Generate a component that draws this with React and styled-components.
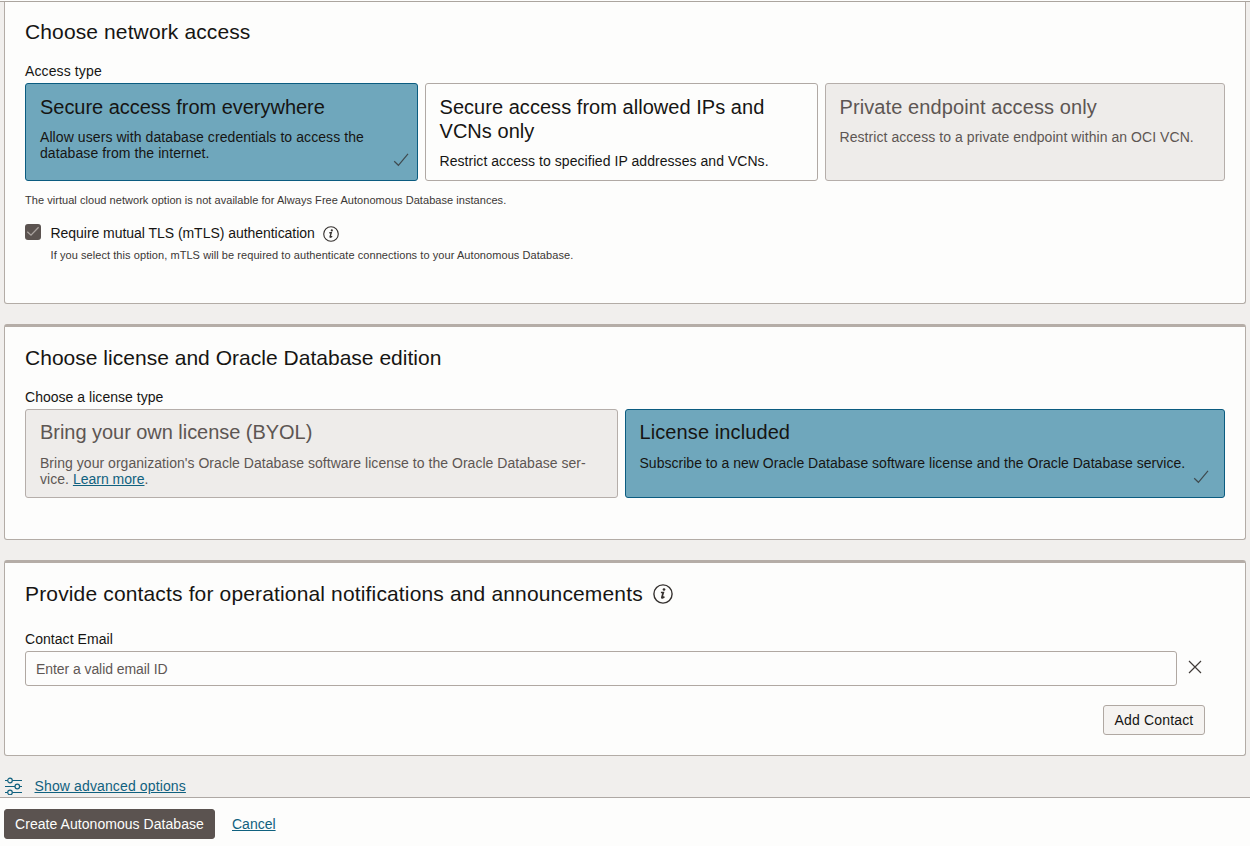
import React from "react";
import styled, { createGlobalStyle } from "styled-components";

const GlobalStyle = createGlobalStyle`
  * { box-sizing: border-box; }
  body {
    margin: 0;
    background: #f1efed;
    font-family: "Liberation Sans", Arial, sans-serif;
    color: #161513;
  }
`;

const Page = styled.div`
  display: flex;
  flex-direction: column;
  height: 846px;
  overflow: hidden;
  border-top: 1px solid #fdfdfc;
`;

const Body = styled.main`
  flex: 1;
  min-height: 0;
  border-top: 1px solid #aba59f;
  padding: 0 4px;
  display: flex;
  flex-direction: column;
  gap: 20px;
`;

const Section = styled.section`
  display: flex;
  flex-direction: column;
  flex: none;
  height: ${(p) => p.$height}px;
  padding: ${(p) => (p.$continued ? 16 : 17)}px 20px 0;
  background: #fdfdfc;
  border: 1px solid #b3aca6;
  border-top: ${(p) => (p.$continued ? "0" : "3px solid #b5ada7")};
  border-radius: ${(p) => (p.$continued ? "0 0 3px 3px" : "3px")};
`;

const Heading = styled.h2`
  display: flex;
  align-items: center;
  gap: 10.5px;
  margin: 0;
  height: 28px;
  font-size: 21px;
  font-weight: 400;
  line-height: 28px;
  letter-spacing: ${(p) => p.$track || 0}px;
  white-space: nowrap;
`;

const Label = styled.label`
  display: block;
  margin-top: ${(p) => p.$gap || 17}px;
  height: 20px;
  font-size: 14px;
  line-height: 17px;
  letter-spacing: ${(p) => p.$track || 0}px;
`;

const Cards = styled.div`
  display: grid;
  grid-template-columns: ${(p) => p.$columns};
  gap: 7px;
  height: ${(p) => p.$height}px;
`;

const tones = {
  selected: { bg: "#6fa7bc", border: "#0b5c80", text: "#161513" },
  plain: { bg: "#fdfdfc", border: "#b0a9a4", text: "#161513" },
  disabled: { bg: "#eeecea", border: "#b5aeaa", text: "#5d5653" },
};

const Card = styled.div`
  position: relative;
  padding: ${(p) => (p.$compact ? 10 : 11)}px 14px 0;
  border: 1px solid ${(p) => tones[p.$tone].border};
  border-radius: 3px;
  background: ${(p) => tones[p.$tone].bg};
  color: ${(p) => tones[p.$tone].text};
  &:not(:first-child) { padding-left: 13.5px; }
`;

const CardTitle = styled.h3`
  margin: 0 0 ${(p) => p.$gap ?? 10}px;
  font-size: 20px;
  font-weight: 400;
  line-height: 24px;
  letter-spacing: ${(p) => p.$track || 0}px;
`;

const CardText = styled.p`
  margin: 0;
  font-size: 14px;
  line-height: 16px;
  letter-spacing: ${(p) => p.$track || 0}px;
  white-space: nowrap;
`;

const CardCheck = styled.svg`
  position: absolute;
  right: ${(p) => p.$right}px;
  bottom: 12px;
`;

const Hint = styled.p`
  margin: ${(p) => p.$top}px 0 0 ${(p) => p.$indent || 0}px;
  font-size: 11px;
  line-height: 14px;
  letter-spacing: ${(p) => p.$track || 0}px;
  color: #3b3735;
`;

const CheckRow = styled.div`
  display: flex;
  align-items: center;
  height: 20px;
  margin-top: 16px;
  > svg { margin-top: 1px; }
`;

const CheckBox = styled.span`
  width: 16px;
  height: 16px;
  margin: -3px 9.5px 0 0;
  border-radius: 3px;
  background: #5b5350;
  svg { display: block; }
`;

const CheckLabel = styled.span`
  margin-right: 8px;
  font-size: 14px;
  letter-spacing: ${(p) => p.$track || 0}px;
`;

const Link = styled.a`
  color: #10617f;
  font-size: 14px;
  letter-spacing: ${(p) => p.$track || 0}px;
  text-decoration: underline;
  text-underline-offset: 1px;
`;

const InputRow = styled.div`
  display: flex;
  align-items: center;
  gap: 11px;
  svg { margin-bottom: 4px; }
`;

const Input = styled.input`
  width: 1152px;
  height: 35px;
  padding: 0 10px;
  border: 1px solid #b0a8a2;
  border-radius: 3px;
  background: #fdfdfc;
  font: 14px "Liberation Sans", Arial, sans-serif;
  letter-spacing: ${(p) => p.$track || 0}px;
  &::placeholder { color: #5f5855; opacity: 1; }
`;

const Button = styled.button`
  flex: none;
  width: ${(p) => p.$width}px;
  height: 30px;
  padding: 0;
  border: 1px solid ${(p) => (p.$primary ? "#5b5350" : "#b0a8a2")};
  border-radius: 3px;
  background: ${(p) => (p.$primary ? "#5b5350" : "#f5f3f1")};
  color: ${(p) => (p.$primary ? "#fdfdfc" : "#161513")};
  font: 14px "Liberation Sans", Arial, sans-serif;
  letter-spacing: ${(p) => p.$track || 0}px;
  white-space: nowrap;
`;

const AddRow = styled.div`
  display: flex;
  justify-content: flex-end;
  margin-top: 19px;
  padding-right: 20px;
`;

const Advanced = styled.div`
  display: flex;
  align-items: center;
  gap: 12.5px;
  height: 20px;
`;

const Footer = styled.footer`
  display: flex;
  align-items: center;
  flex: none;
  gap: 17px;
  height: 49px;
  padding: 4px 4px 0;
  border-top: 1px solid #aea8a4;
  background: #fdfdfc;
`;

const Tick = ({ right }) => (
  <CardCheck $right={right} width="16" height="16" viewBox="0 0 16 16" fill="none" stroke="#3f4a4f" strokeWidth="1.2">
    <path d="M1.2 9.2 5.4 13.3 15 1.8" />
  </CardCheck>
);

const Info = ({ size }) => (
  <svg width={size} height={size} viewBox="0 0 20 20" fill="none" stroke="#35312f">
    <circle cx="10" cy="10" r="9.1" strokeWidth="1.4" />
    <path d="M7.9 8.5h2.4l-1.4 4.7c-.3 1.2.8 1.1 2.5-.5" strokeWidth="1.7" />
    <circle cx="11" cy="5.5" r="1.35" fill="#35312f" stroke="none" />
  </svg>
);

export default function App() {
  return (
    <>
      <GlobalStyle />
      <Page>
        <Body>
          <Section $continued $height={302}>
            <Heading $track={0.12}>Choose network access</Heading>
            <Label $track={0.12}>Access type</Label>
            <Cards $columns="393px 393px 400px" $height={98}>
              <Card $tone="selected">
                <CardTitle $track={-0.03}>Secure access from everywhere</CardTitle>
                <CardText $track={0.08}>
                  Allow users with database credentials to access the
                  <br />
                  database from the internet.
                </CardText>
                <Tick right={8} />
              </Card>
              <Card $tone="plain">
                <CardTitle $track={0.04}>
                  Secure access from allowed IPs and
                  <br />
                  VCNs only
                </CardTitle>
                <CardText $track={0.05}>Restrict access to specified IP addresses and VCNs.</CardText>
              </Card>
              <Card $tone="disabled">
                <CardTitle $track={0.1}>Private endpoint access only</CardTitle>
                <CardText $track={0.06}>Restrict access to a private endpoint within an OCI VCN.</CardText>
              </Card>
            </Cards>
            <Hint $top={12} $track={0.045}>
              The virtual cloud network option is not available for Always Free Autonomous Database instances.
            </Hint>
            <CheckRow>
              <CheckBox>
                <svg width="16" height="16" viewBox="0 0 16 16" fill="none" stroke="#aaa39f" strokeWidth="1.3">
                  <path d="M2.3 7.8 6 11.2 13.6 3.2" />
                </svg>
              </CheckBox>
              <CheckLabel $track={-0.04}>Require mutual TLS (mTLS) authentication</CheckLabel>
              <Info size={16} />
            </CheckRow>
            <Hint $top={5} $indent={25.5} $track={0.07}>
              If you select this option, mTLS will be required to authenticate connections to your Autonomous Database.
            </Hint>
          </Section>

          <Section $height={216}>
            <Heading $track={0.02}>Choose license and Oracle Database edition</Heading>
            <Label $track={0.03}>Choose a license type</Label>
            <Cards $columns="593px 600px" $height={89}>
              <Card $tone="disabled" $compact>
                <CardTitle $gap={11} $track={-0.04}>Bring your own license (BYOL)</CardTitle>
                <CardText $track={0.035}>
                  Bring your organization's Oracle Database software license to the Oracle Database ser-
                  <br />
                  vice. <Link>Learn more</Link>.
                </CardText>
              </Card>
              <Card $tone="selected" $compact>
                <CardTitle $gap={11} $track={0.1}>License included</CardTitle>
                <CardText $track={0.02}>
                  Subscribe to a new Oracle Database software license and the Oracle Database service.
                </CardText>
                <Tick right={15} />
              </Card>
            </Cards>
          </Section>

          <Section $height={196}>
            <Heading $track={0.15}>
              Provide contacts for operational notifications and announcements
              <Info size={20} />
            </Heading>
            <Label $gap={23} $track={0.05}>Contact Email</Label>
            <InputRow>
              <Input placeholder="Enter a valid email ID" $track={-0.07} />
              <svg width="14" height="14" viewBox="0 0 14 14" fill="none" stroke="#403b39" strokeWidth="1.2">
                <path d="M1 1 13 13M13 1 1 13" />
              </svg>
            </InputRow>
            <AddRow>
              <Button $width={102} $track={0.16}>Add Contact</Button>
            </AddRow>
          </Section>

          <Advanced>
            <svg width="18" height="18" viewBox="0 0 18 18" fill="none" stroke="#10617f" strokeWidth="1.2">
              <path d="M1 3.5h2.6M8.4 3.5h9.6M1 9.5h10M15.6 9.5h2.4M1 15.5h2.6M8.4 15.5h9.6" />
              <circle cx="6" cy="3.5" r="2.3" />
              <circle cx="13.3" cy="9.5" r="2.3" />
              <circle cx="6" cy="15.5" r="2.3" />
            </svg>
            <Link $track={0.13}>Show advanced options</Link>
          </Advanced>
        </Body>
        <Footer>
          <Button $primary $width={211} $track={0.05}>Create Autonomous Database</Button>
          <Link>Cancel</Link>
        </Footer>
      </Page>
    </>
  );
}
